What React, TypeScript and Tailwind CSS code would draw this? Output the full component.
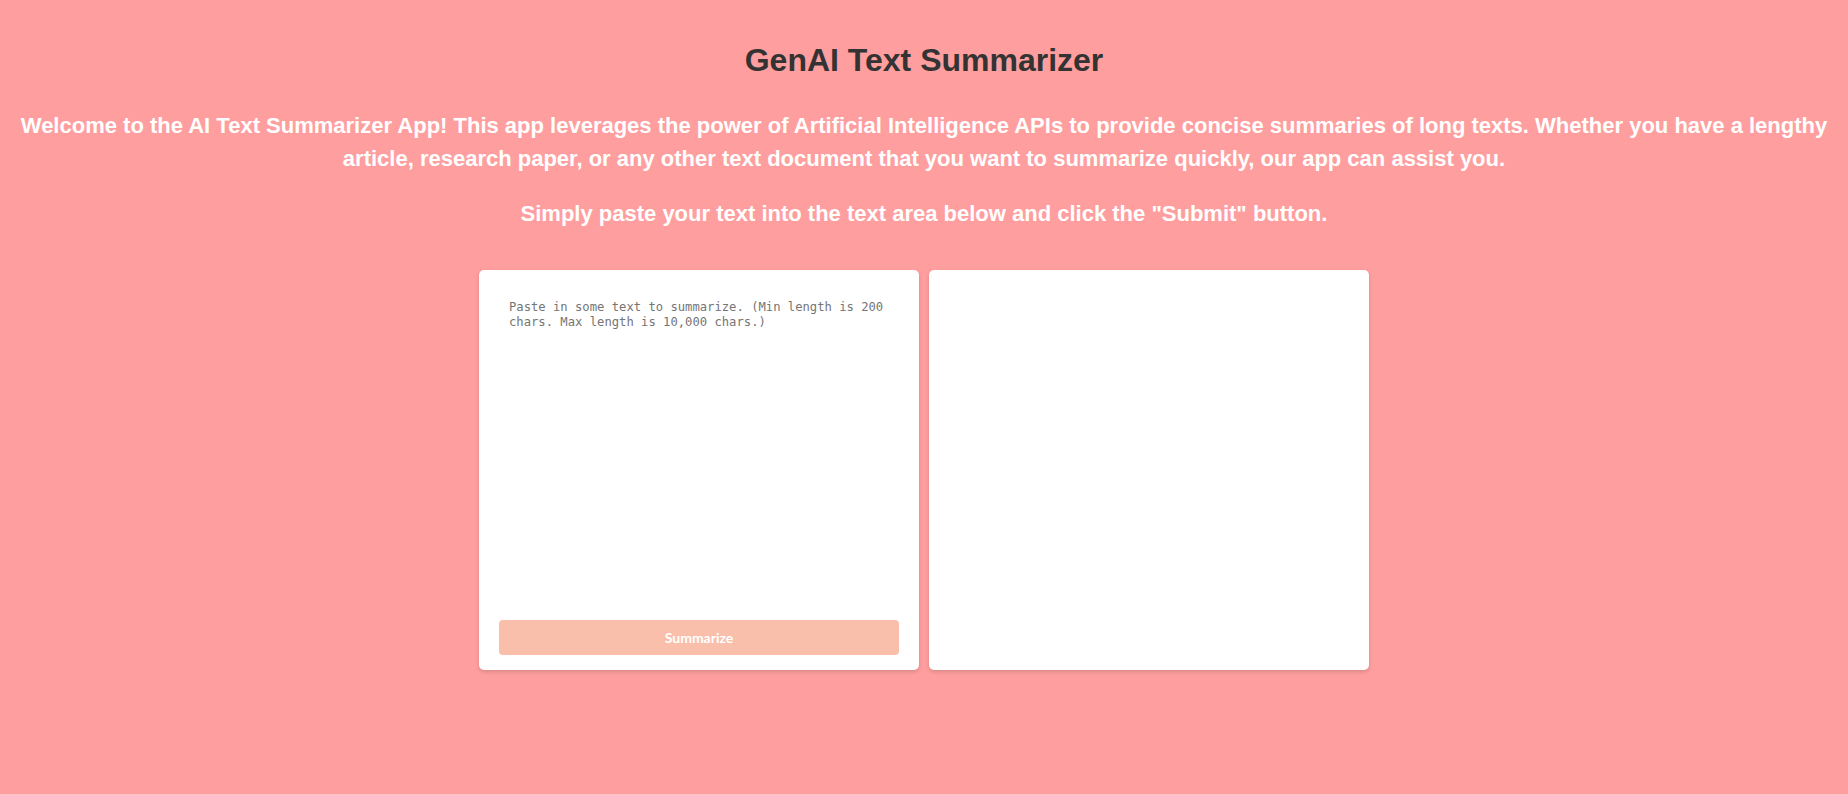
import { useState } from 'react';

export default function App() {
  const [text, setText] = useState('');

  return (
    <div className="min-h-[794px] bg-[#ff9e9e] pt-[42px] font-['Liberation_Sans',Arial,sans-serif] text-center">
      <h1 className="text-[32px] leading-[37px] font-bold text-[#333333]">GenAI Text Summarizer</h1>

      <div className="mt-[30px] px-[16px] text-[22px] leading-[33px] font-bold text-white">
        <p>
          Welcome to the AI Text Summarizer App! This app leverages the power of Artificial Intelligence APIs to provide
          concise summaries of long texts. Whether you have a lengthy article, research paper, or any other text document
          that you want to summarize quickly, our app can assist you.
        </p>
        <p className="mt-[22px]">Simply paste your text into the text area below and click the "Submit" button.</p>
      </div>

      <div className="mt-[40px] flex justify-center gap-[10px]">
        <div className="flex h-[400px] w-[440px] flex-col rounded-[5px] bg-white px-[20px] pt-[20px] pb-[15px] shadow-[0_2px_4px_rgba(0,0,0,0.15)]">
          <textarea
            value={text}
            onChange={e => setText(e.target.value)}
            placeholder="Paste in some text to summarize. (Min length is 200 chars. Max length is 10,000 chars.)"
            className="flex-1 resize-none p-[10px] text-left font-['DejaVu_Sans_Mono',monospace] text-[12.2px] leading-[15px] text-[#444] outline-none placeholder:text-[#757575]"
          />
          <button
            disabled={text.length < 200}
            className="mt-[12px] h-[35px] w-full rounded-[4px] bg-[#f9bfab] font-['Lato',sans-serif] text-[14px] font-bold text-white"
          >
            Summarize
          </button>
        </div>
        <div className="h-[400px] w-[440px] rounded-[5px] bg-white shadow-[0_2px_4px_rgba(0,0,0,0.15)]"></div>
      </div>
    </div>
  );
}
